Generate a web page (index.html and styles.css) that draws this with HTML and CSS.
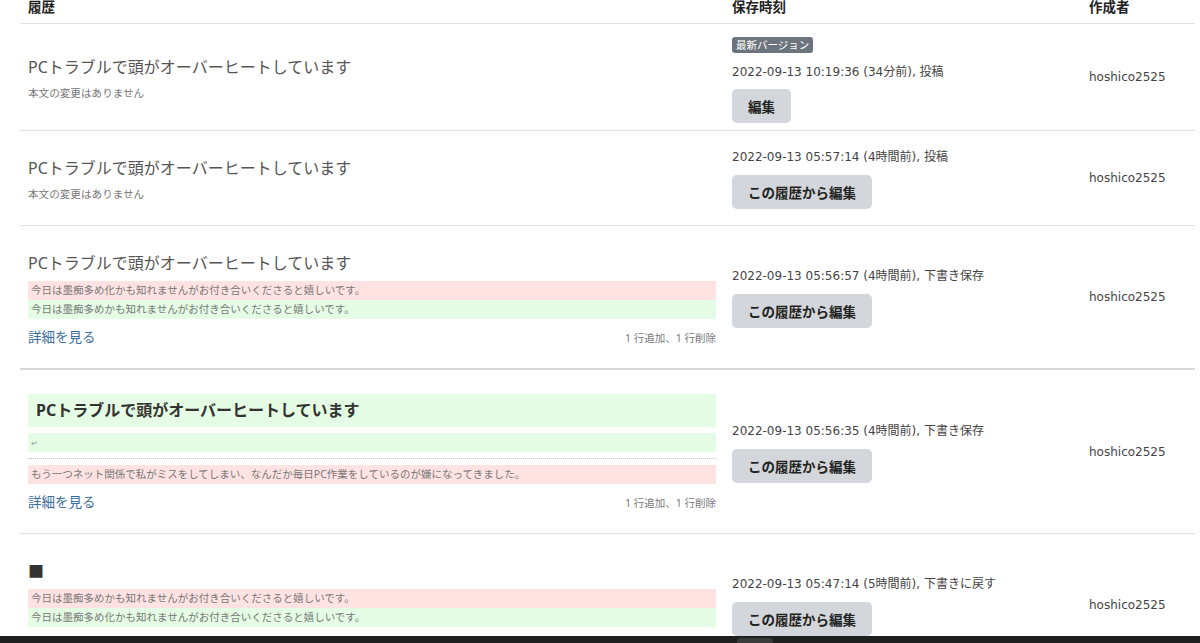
FILE: index.html
```html
<!DOCTYPE html>
<html lang="ja">
<head>
  <meta charset="UTF-8">
  <meta name="viewport" content="width=device-width, initial-scale=1.0">
  <title>履歴</title>
  <link rel="stylesheet" href="styles.css">
</head>
<body>
  <table class="history">
    <thead>
      <tr>
        <th class="col-body">履歴</th>
        <th class="col-date">保存時刻</th>
        <th class="col-user">作成者</th>
      </tr>
    </thead>
    <tbody>
      <tr>
        <td class="col-body">
          <div class="entry">
            <div class="title">PCトラブルで頭がオーバーヒートしています</div>
            <div class="note">本文の変更はありません</div>
          </div>
        </td>
        <td class="col-date latest">
          <span class="badge">最新バージョン</span>
          <div class="stamp">2022-09-13 10:19:36 (34分前), 投稿</div>
          <button class="btn">編集</button>
        </td>
        <td class="col-user">hoshico2525</td>
      </tr>

      <tr>
        <td class="col-body">
          <div class="entry">
            <div class="title">PCトラブルで頭がオーバーヒートしています</div>
            <div class="note">本文の変更はありません</div>
          </div>
        </td>
        <td class="col-date">
          <div class="stamp">2022-09-13 05:57:14 (4時間前), 投稿</div>
          <button class="btn">この履歴から編集</button>
        </td>
        <td class="col-user">hoshico2525</td>
      </tr>

      <tr class="group-end">
        <td class="col-body">
          <div class="entry">
            <div class="title">PCトラブルで頭がオーバーヒートしています</div>
            <div class="diff">
              <div class="line removed">今日は墨痴多め化かも知れませんがお付き合いくださると嬉しいです。</div>
              <div class="line added">今日は墨痴多めかも知れませんがお付き合いくださると嬉しいです。</div>
            </div>
            <div class="diff-foot">
              <a href="#" class="more">詳細を見る</a>
              <span class="count">1 行追加、1 行削除</span>
            </div>
          </div>
        </td>
        <td class="col-date">
          <div class="stamp">2022-09-13 05:56:57 (4時間前), 下書き保存</div>
          <button class="btn">この履歴から編集</button>
        </td>
        <td class="col-user">hoshico2525</td>
      </tr>

      <tr>
        <td class="col-body">
          <div class="entry">
            <div class="title-box added">PCトラブルで頭がオーバーヒートしています</div>
            <div class="diff">
              <div class="line added"><span class="ret">↵</span></div>
              <div class="sep"></div>
              <div class="line removed">もう一つネット関係で私がミスをしてしまい、なんだか毎日PC作業をしているのが嫌になってきました。</div>
            </div>
            <div class="diff-foot">
              <a href="#" class="more">詳細を見る</a>
              <span class="count">1 行追加、1 行削除</span>
            </div>
          </div>
        </td>
        <td class="col-date">
          <div class="stamp">2022-09-13 05:56:35 (4時間前), 下書き保存</div>
          <button class="btn">この履歴から編集</button>
        </td>
        <td class="col-user">hoshico2525</td>
      </tr>

      <tr>
        <td class="col-body">
          <div class="entry">
            <div class="title dark">■</div>
            <div class="diff">
              <div class="line removed">今日は墨痴多めかも知れませんがお付き合いくださると嬉しいです。</div>
              <div class="line added">今日は墨痴多め化かも知れませんがお付き合いくださると嬉しいです。</div>
            </div>
            <div class="diff-foot">
              <a href="#" class="more">詳細を見る</a>
              <span class="count">1 行追加、1 行削除</span>
            </div>
          </div>
        </td>
        <td class="col-date">
          <div class="stamp">2022-09-13 05:47:14 (5時間前), 下書きに戻す</div>
          <button class="btn">この履歴から編集</button>
        </td>
        <td class="col-user">hoshico2525</td>
      </tr>
    </tbody>
  </table>

  <!-- bottom toolbar, only its top edge is visible -->
  <div class="toolbar"><span class="toolbar-btn"></span></div>
</body>
</html>
```

FILE: styles.css
```css
body {
  margin: 0;
  background-color: #fff;
  color: #444;
  font-family: "Noto Sans", "Noto Sans CJK JP", sans-serif;
}

.history {
  width: 1175px;
  margin: -3px 0 0 20px;
  border-collapse: collapse;
  table-layout: fixed;
}

/* widths are content widths, the 8px side paddings come on top */
.col-body { width: 688px; }
.col-date { width: 341px; }
.col-user { width: 98px; }

th {
  text-align: left;
  font-size: 13.5px;
  font-weight: bold;
  color: #222;
  line-height: 20px;
  padding: 0 8px 6px;
  border-bottom: 1px solid #e2e2e2;
}

td {
  padding: 10px 8px;
  vertical-align: middle;
  border-bottom: 1px solid #e2e2e2;
  font-size: 13px;
}

tr.group-end td {
  border-bottom: 2px solid #d8d8d8;
}

td.col-body {
  padding-top: 0;
  padding-bottom: 0;
}

.entry {
  padding: 24px 0 22px;
}

.title {
  font-size: 16px;
  line-height: 26px;
  color: #555;
}

.title.dark {
  color: #333;
}

.note {
  margin: 6px 0 2px;
  font-size: 10.6px;
  line-height: 14px;
  color: #777;
}

.title-box {
  padding: 0 8px;
  line-height: 33px;
  font-size: 16px;
  font-weight: bold;
  color: #333;
  margin-bottom: 6px;
}

.diff {
  margin-top: 5px;
}

.title-box + .diff {
  margin-top: 0;
}

.line {
  padding-left: 3px;
  font-size: 10.5px;
  line-height: 19px;
  color: #777;
  white-space: nowrap;
}

.added { background-color: #e4fde4; }
.removed { background-color: #ffe3e3; }

.ret {
  font-size: 8px;
  color: #999;
}

.sep {
  border-top: 1px dotted #c4c4c4;
  margin: 6px 0;
}

.diff-foot {
  display: flex;
  justify-content: space-between;
  align-items: center;
  margin-top: 9px;
}

.more {
  font-size: 13.5px;
  line-height: 18px;
  color: #3a6c9c;
  text-decoration: none;
}

.count {
  font-size: 10.5px;
  color: #777;
}

.col-date .stamp {
  font-family: "DejaVu Sans", "Noto Sans CJK JP", sans-serif;
  font-size: 12px;
  line-height: 20px;
  color: #444;
  margin-bottom: 8px;
}

td.col-date.latest {
  padding: 13px 8px 7px;
}

.latest .stamp {
  margin-bottom: 7px;
}

.badge {
  display: block;
  width: max-content;
  background-color: #6c757d;
  color: #fff;
  font-size: 10.5px;
  line-height: 16px;
  padding: 0 4px;
  border-radius: 3px;
  margin-bottom: 9px;
}

.btn {
  display: block;
  height: 34px;
  padding: 0 16px;
  border: none;
  border-radius: 5px;
  background-color: #d3d6da;
  color: #222;
  font-family: inherit;
  font-size: 13.5px;
  font-weight: bold;
  cursor: pointer;
}

.btn:hover {
  background-color: #c4c8cc;
}

td.col-user {
  font-family: "DejaVu Sans", sans-serif;
  font-size: 12px;
  color: #444;
}

.toolbar {
  position: fixed;
  left: 0;
  right: 0;
  bottom: 0;
  height: 7px;
  background-color: #1f1f1f;
  overflow: hidden;
}

.toolbar-btn {
  display: block;
  width: 36px;
  height: 20px;
  margin: 2px 0 0 737px;
  border-radius: 4px;
  background-color: #3a3a3a;
}
```
